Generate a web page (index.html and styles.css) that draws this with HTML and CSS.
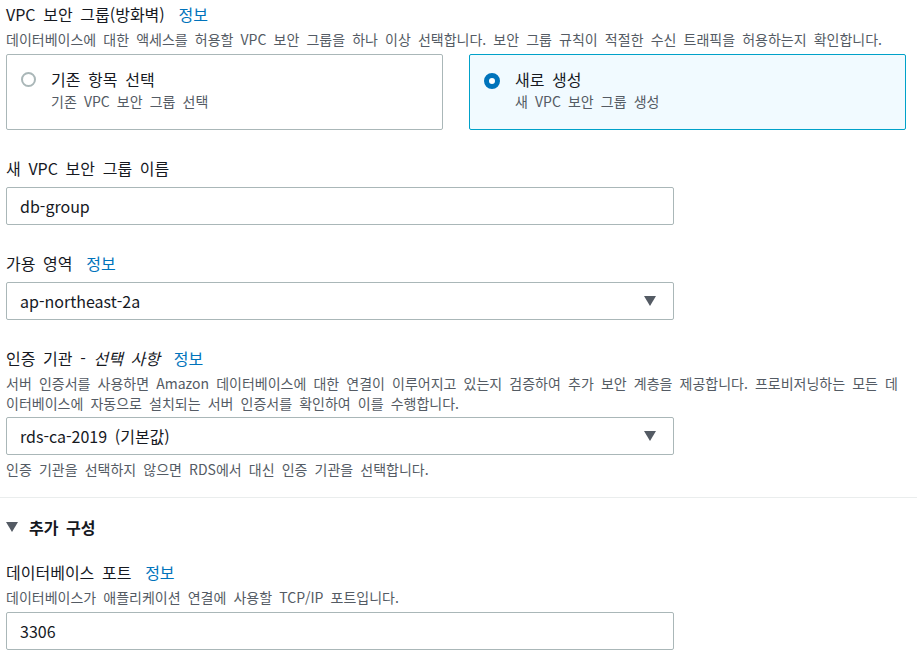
FILE: index.html
```html
<!DOCTYPE html>
<html lang="ko">
<head>
<meta charset="utf-8">
<link rel="stylesheet" href="styles.css">
</head>
<body>
<div class="page">
  <div class="field first">
    <div class="label">VPC 보안 그룹(방화벽) <a class="info">정보</a></div>
    <div class="desc">데이터베이스에 대한 액세스를 허용할 VPC 보안 그룹을 하나 이상 선택합니다. 보안 그룹 규칙이 적절한 수신 트래픽을 허용하는지 확인합니다.</div>
    <div class="tiles">
      <div class="tile">
        <span class="radio"></span>
        <div class="tile-text">
          <div class="tile-label">기존 항목 선택</div>
          <div class="tile-sub">기존 VPC 보안 그룹 선택</div>
        </div>
      </div>
      <div class="tile selected">
        <span class="radio checked"></span>
        <div class="tile-text">
          <div class="tile-label">새로 생성</div>
          <div class="tile-sub">새 VPC 보안 그룹 생성</div>
        </div>
      </div>
    </div>
  </div>

  <div class="field">
    <div class="label">새 VPC 보안 그룹 이름</div>
    <div class="control input">db-group</div>
  </div>

  <div class="field">
    <div class="label">가용 영역 <a class="info">정보</a></div>
    <div class="control select">ap-northeast-2a<span class="caret"></span></div>
  </div>

  <div class="field">
    <div class="label">인증 기관 - <em>선택 사항</em> <a class="info">정보</a></div>
    <div class="desc">서버 인증서를 사용하면 Amazon 데이터베이스에 대한 연결이 이루어지고 있는지 검증하여 추가 보안 계층을 제공합니다. 프로비저닝하는 모든 데이터베이스에 자동으로 설치되는 서버 인증서를 확인하여 이를 수행합니다.</div>
    <div class="control select">rds-ca-2019 (기본값)<span class="caret"></span></div>
    <div class="hint">인증 기관을 선택하지 않으면 RDS에서 대신 인증 기관을 선택합니다.</div>
  </div>

  <div class="divider"></div>

  <div class="expander"><span class="exp-caret"></span>추가 구성</div>

  <div class="field port">
    <div class="label">데이터베이스 포트 <a class="info">정보</a></div>
    <div class="desc">데이터베이스가 애플리케이션 연결에 사용할 TCP/IP 포트입니다.</div>
    <div class="control input">3306</div>
  </div>
</div>
</body>
</html>
```

FILE: styles.css
```css
* { box-sizing: border-box; }
html, body { margin: 0; padding: 0; background: #ffffff; }
body {
  font-family: "Noto Sans CJK KR", "Noto Sans", sans-serif;
  color: #16191f;
  word-spacing: 0.2em;
  overflow: hidden;
}
.page {
  width: 917px;
  padding: 3px 11px 0 6px;
}
.field { margin-top: 27px; }
.field.first { margin-top: 0; }
.label {
  font-size: 16px;
  line-height: 22px;
}
.label em { font-style: italic; }
.info {
  color: #0073bb;
  margin-left: 6px;
  text-decoration: none;
}
.desc {
  font-size: 14px;
  line-height: 20px;
  color: #545b64;
  margin-top: 4px;
}
.tiles {
  display: grid;
  grid-template-columns: 1fr 1fr;
  gap: 26px;
  margin-top: 5px;
}
.tile {
  display: flex;
  align-items: flex-start;
  border: 1px solid #aab7b8;
  border-radius: 2px;
  height: 76px;
  padding: 13px 14px 0 14px;
}
.tile.selected {
  border-color: #00a1c9;
  background: #f1faff;
}
.radio {
  flex: none;
  width: 15px;
  height: 15px;
  border-radius: 50%;
  border: 2px solid #aab7b8;
  margin-top: 4px;
  margin-right: 15px;
  background: #fff;
}
.radio.checked {
  width: 16px;
  height: 16px;
  border: 5px solid #0073bb;
  margin-top: 5px;
}
.tile-label { font-size: 16px; line-height: 22px; }
.tile-sub { font-size: 14px; line-height: 20px; color: #545b64; margin-top: 1px; }

.control {
  position: relative;
  width: 668px;
  height: 38px;
  border: 1px solid #aab7b8;
  border-radius: 2px;
  padding: 0 13px;
  font-size: 16px;
  line-height: 36px;
  margin-top: 8px;
  background: #fff;
}
.desc + .control { margin-top: 4px; }
.caret {
  position: absolute;
  right: 17px;
  top: 13px;
  width: 0;
  height: 0;
  border-left: 6px solid transparent;
  border-right: 6px solid transparent;
  border-top: 10px solid #545b64;
}
.hint {
  font-size: 14px;
  line-height: 20px;
  color: #545b64;
  margin-top: 4px;
}
.divider {
  height: 1px;
  background: #eaeded;
  margin: 18px -11px 0 -6px;
}
.expander {
  display: flex;
  align-items: center;
  font-size: 16px;
  font-weight: 700;
  line-height: 22px;
  color: #16191f;
  margin-top: 18px;
}
.exp-caret {
  width: 0;
  height: 0;
  border-left: 6px solid transparent;
  border-right: 6px solid transparent;
  border-top: 10px solid #545b64;
  margin-right: 11px;
}
.field.port { margin-top: 23px; }
.field.port .desc + .control { margin-top: 5px; }
```
